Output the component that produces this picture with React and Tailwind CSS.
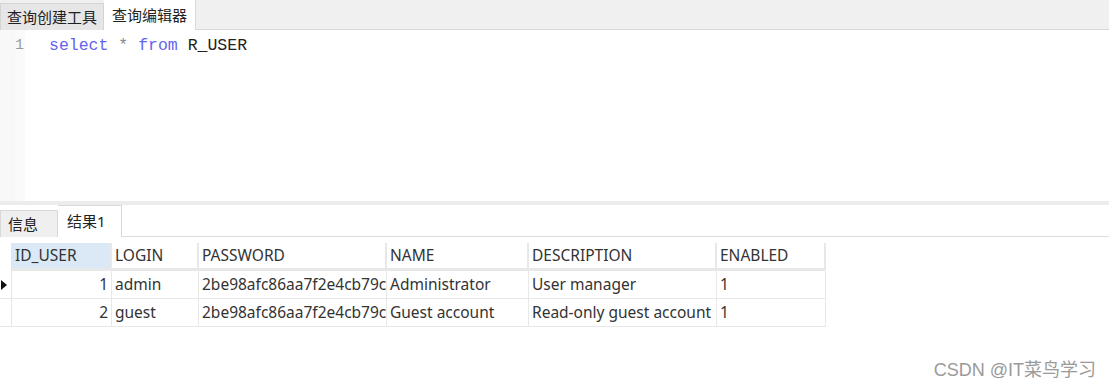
import React from "react";

const columns = [
  { key: "id", label: "ID_USER", w: "w-[100px]", right: true },
  { key: "login", label: "LOGIN", w: "w-[87px]" },
  { key: "password", label: "PASSWORD", w: "w-[188px]" },
  { key: "name", label: "NAME", w: "w-[142px]" },
  { key: "desc", label: "DESCRIPTION", w: "w-[188px]" },
  { key: "enabled", label: "ENABLED", w: "w-[109px]" },
];

const rows = [
  { id: "1", login: "admin", password: "2be98afc86aa7f2e4cb79c", name: "Administrator", desc: "User manager", enabled: "1" },
  { id: "2", login: "guest", password: "2be98afc86aa7f2e4cb79c", name: "Guest account", desc: "Read-only guest account", enabled: "1" },
];

const ui = { fontFamily: '"Noto Sans", "Noto Sans CJK SC", sans-serif' };
const mono = { fontFamily: '"Liberation Mono", "DejaVu Sans Mono", monospace' };

export default function App() {
  return (
    <div className="w-[1109px] h-[387px] bg-white overflow-hidden text-[#222]" style={ui}>
      {/* top tabs */}
      <div className="flex h-[30px] bg-[#f0f0f0] border-b border-[#d9d9d9]">
        <div className="mt-[3px] h-[27px] w-[104px] pl-[6px] flex items-center bg-[#e6e6e6] border border-[#d4d4d4] border-b-0 text-[15px]">
          查询创建工具
        </div>
        <div className="h-[30px] -mb-px w-[92px] pl-[8px] flex items-center bg-white border-r border-[#d9d9d9] text-[15px]">
          查询编辑器
        </div>
        <div className="flex-1" />
      </div>

      {/* editor */}
      <div className="flex h-[171px]">
        <div className="w-[15px] bg-[#f8f8f8]" />
        <div className="w-[10px] bg-[#fafafa] pt-[6px] text-[15px] leading-[20px] text-[#9a9a9a]" style={mono}>
          1
        </div>
        <div className="flex-1 pl-[24px] pt-[6px] text-[16.5px] leading-[20px]" style={mono}>
          <span className="text-[#6464f0]">select</span>
          <span className="text-[#888]"> * </span>
          <span className="text-[#6464f0]">from</span>
          <span className="text-[#222]"> R_USER</span>
        </div>
      </div>

      {/* splitter */}
      <div className="h-[4px] bg-[#ececec]" />

      {/* bottom tabs */}
      <div className="flex h-[32px] border-b border-[#dcdcdc]">
        <div className="mt-[5px] h-[27px] w-[58px] pl-[7px] flex items-center bg-[#efefef] border border-[#d8d8d8] border-b-0 text-[15px]">
          信息
        </div>
        <div className="h-[32px] -mb-px w-[64px] pl-[9px] flex items-center bg-white border border-l-0 border-[#d8d8d8] border-b-0 text-[15px]">
          结果1
        </div>
      </div>

      {/* grid */}
      <div className="pt-[6px] text-[15.5px] text-[#333]">
        <div className="flex h-[28px]">
          <div className="w-[12px] shrink-0 border-r border-[#e6e6e6]" />
          {columns.map((c, i) => (
            <div
              key={c.key}
              className={`${c.w} shrink-0 flex items-center pl-[3px] border-r-2 border-b-[3px] border-[#e8e8e8] ${i === 0 ? "bg-[#dbe9f7]" : "bg-white"}`}
            >
              {c.label}
            </div>
          ))}
        </div>
        {rows.map((r, ri) => (
          <div key={r.id} className="flex h-[28px]">
            <div className="w-[12px] shrink-0 flex items-center border-r border-b border-[#e6e6e6]">
              {ri === 0 && (
                <svg width="8" height="12" viewBox="0 0 8 12">
                  <path d="M1 1 L7 6 L1 11 Z" fill="#111" />
                </svg>
              )}
            </div>
            {columns.map((c) => (
              <div
                key={c.key}
                className={`${c.w} shrink-0 flex items-center overflow-hidden whitespace-nowrap border-r border-b border-[#e8e8e8] ${c.right ? "justify-end pr-[3px]" : "pl-[3px]"}`}
              >
                {r[c.key]}
              </div>
            ))}
          </div>
        ))}
      </div>

      {/* watermark */}
      <div className="flex justify-end pr-[13px] mt-[30px]">
        <span className="text-[18px] text-[#9a9a9a]" style={{ fontFamily: '"Liberation Sans", "Noto Sans CJK SC", sans-serif' }}>
          CSDN @IT菜鸟学习
        </span>
      </div>
    </div>
  );
}
